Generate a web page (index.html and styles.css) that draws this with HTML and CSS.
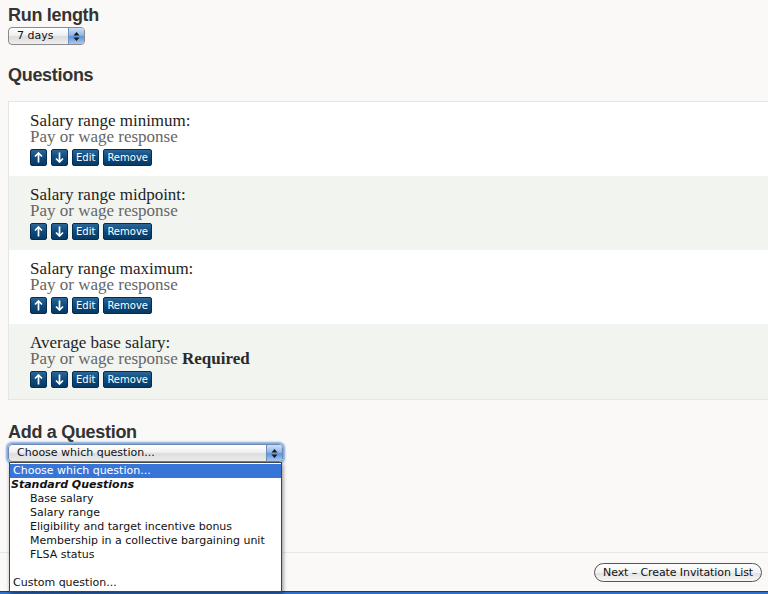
FILE: index.html
```html
<!DOCTYPE html>
<html>
<head>
<meta charset="utf-8">
<link rel="stylesheet" href="styles.css">
</head>
<body>
<div class="page">
  <h2 class="heading h-run">Run length</h2>
  <div class="select select-small">
    <span class="select-label">7 days</span>
    <span class="select-arrows"><svg width="7" height="11" viewBox="0 0 7 11"><path d="M3.5 1 L6.5 4.5 H0.5 Z M3.5 10 L6.5 6.5 H0.5 Z" fill="#1a1a1a"/></svg></span>
  </div>

  <h2 class="heading h-questions">Questions</h2>
  <div class="qlist">
    <div class="qrow">
      <div class="qtitle">Salary range minimum:</div>
      <div class="qtype">Pay or wage response</div>
      <div class="qbtns">
        <span class="btn btn-arrow"><svg width="9" height="11" viewBox="0 0 9 11"><path d="M4.5 1 V10.5 M1 4.5 L4.5 1 L8 4.5" stroke="#fff" stroke-width="1.7" fill="none"/></svg></span>
        <span class="btn btn-arrow"><svg width="9" height="11" viewBox="0 0 9 11"><path d="M4.5 0.5 V10 M1 6.5 L4.5 10 L8 6.5" stroke="#fff" stroke-width="1.7" fill="none"/></svg></span>
        <span class="btn">Edit</span>
        <span class="btn">Remove</span>
      </div>
    </div>
    <div class="qrow alt">
      <div class="qtitle">Salary range midpoint:</div>
      <div class="qtype">Pay or wage response</div>
      <div class="qbtns">
        <span class="btn btn-arrow"><svg width="9" height="11" viewBox="0 0 9 11"><path d="M4.5 1 V10.5 M1 4.5 L4.5 1 L8 4.5" stroke="#fff" stroke-width="1.7" fill="none"/></svg></span>
        <span class="btn btn-arrow"><svg width="9" height="11" viewBox="0 0 9 11"><path d="M4.5 0.5 V10 M1 6.5 L4.5 10 L8 6.5" stroke="#fff" stroke-width="1.7" fill="none"/></svg></span>
        <span class="btn">Edit</span>
        <span class="btn">Remove</span>
      </div>
    </div>
    <div class="qrow">
      <div class="qtitle">Salary range maximum:</div>
      <div class="qtype">Pay or wage response</div>
      <div class="qbtns">
        <span class="btn btn-arrow"><svg width="9" height="11" viewBox="0 0 9 11"><path d="M4.5 1 V10.5 M1 4.5 L4.5 1 L8 4.5" stroke="#fff" stroke-width="1.7" fill="none"/></svg></span>
        <span class="btn btn-arrow"><svg width="9" height="11" viewBox="0 0 9 11"><path d="M4.5 0.5 V10 M1 6.5 L4.5 10 L8 6.5" stroke="#fff" stroke-width="1.7" fill="none"/></svg></span>
        <span class="btn">Edit</span>
        <span class="btn">Remove</span>
      </div>
    </div>
    <div class="qrow alt">
      <div class="qtitle">Average base salary:</div>
      <div class="qtype">Pay or wage response <strong class="req">Required</strong></div>
      <div class="qbtns">
        <span class="btn btn-arrow"><svg width="9" height="11" viewBox="0 0 9 11"><path d="M4.5 1 V10.5 M1 4.5 L4.5 1 L8 4.5" stroke="#fff" stroke-width="1.7" fill="none"/></svg></span>
        <span class="btn btn-arrow"><svg width="9" height="11" viewBox="0 0 9 11"><path d="M4.5 0.5 V10 M1 6.5 L4.5 10 L8 6.5" stroke="#fff" stroke-width="1.7" fill="none"/></svg></span>
        <span class="btn">Edit</span>
        <span class="btn">Remove</span>
      </div>
    </div>
  </div>

  <h2 class="heading h-add">Add a Question</h2>
  <div class="addwrap">
    <div class="select select-wide">
      <span class="select-label">Choose which question...</span>
      <span class="select-arrows"><svg width="7" height="11" viewBox="0 0 7 11"><path d="M3.5 1 L6.5 4.5 H0.5 Z M3.5 10 L6.5 6.5 H0.5 Z" fill="#1a1a1a"/></svg></span>
    </div>
    <div class="dropdown">
      <div class="opt selected">Choose which question...</div>
      <div class="opt group">Standard Questions</div>
      <div class="opt sub">Base salary</div>
      <div class="opt sub">Salary range</div>
      <div class="opt sub">Eligibility and target incentive bonus</div>
      <div class="opt sub">Membership in a collective bargaining unit</div>
      <div class="opt sub">FLSA status</div>
      <div class="opt empty"></div>
      <div class="opt">Custom question...</div>
    </div>
  </div>
</div>
<div class="actions">
  <span class="next-btn">Next – Create Invitation List</span>
</div>
<div class="footer-bar"></div>
</body>
</html>
```
FILE: styles.css
```css
html, body {
  margin: 0;
  padding: 0;
  background: #faf9f7;
  overflow: hidden;
}
body {
  width: 768px;
  height: 594px;
  display: flex;
  flex-direction: column;
  font-family: "DejaVu Sans", sans-serif;
}
.page {
  padding-left: 8px;
  position: relative;
}
.heading {
  font-family: "Liberation Sans", Arial, sans-serif;
  font-weight: bold;
  font-size: 18px;
  line-height: 20px;
  color: #333;
  margin: 0;
  letter-spacing: -0.3px;
}
.h-run {
  padding-top: 5px;
}
.h-questions {
  margin-top: 20px;
}
.h-add {
  margin-top: 22px;
}

.select {
  display: flex;
  align-items: stretch;
  height: 16px;
  border: 1px solid #8a8a8a;
  border-radius: 4px;
  background: linear-gradient(#ffffff, #f0f0f0 45%, #dcdcdc 55%, #eeeeee);
  font-size: 11px;
  color: #111;
  overflow: hidden;
  box-sizing: content-box;
}
.select-small {
  width: 75px;
  margin-top: 2px;
}
.select-label {
  flex: 1;
  line-height: 16px;
  padding-left: 8px;
}
.select-arrows {
  width: 15px;
  display: flex;
  align-items: center;
  justify-content: center;
  border-left: 1px solid #6d8fbf;
  background: linear-gradient(#cfe0f6, #8fb6e8 45%, #5f93da 55%, #a9cbf3);
}

.qlist {
  margin-top: 16px;
  border: 1px solid #e6e6e4;
  border-right: none;
  display: flex;
  flex-direction: column;
}
.qrow {
  background: #ffffff;
  padding: 11px 0 10px 21px;
  font-family: "Liberation Serif", "Times New Roman", serif;
  font-size: 17px;
  line-height: 16px;
}
.qrow.alt {
  background: #f2f4ef;
}
.qrow:last-child {
  padding-bottom: 11px;
}
.qtitle {
  color: #1e1e1e;
}
.qtype {
  color: #666;
}
.req {
  color: #2a2a2a;
}
.qbtns {
  display: flex;
  gap: 4px;
  margin-top: 4px;
}
.btn {
  height: 17px;
  box-sizing: border-box;
  padding: 0 3px;
  border-radius: 2px;
  border: 1px solid #062d4f;
  background: linear-gradient(#2a6697, #0d4a7d 50%, #063a66);
  color: #fff;
  font-family: "DejaVu Sans", sans-serif;
  font-size: 10px;
  line-height: 15px;
  display: flex;
  align-items: center;
  justify-content: center;
}
.btn-arrow {
  width: 17px;
  padding: 0;
}

.addwrap {
  position: relative;
  margin-top: 2px;
  height: 108px;
}
.select-wide {
  width: 273px;
  border-color: #6c88b3;
  box-shadow: 0 0 2px 2px #7ea7e0;
}
.dropdown {
  position: absolute;
  left: 1px;
  top: 18px;
  width: 271px;
  background: #fff;
  border: 1px solid #444;
  box-shadow: 1px 2px 4px rgba(0,0,0,0.45);
  padding: 1px 0 1px;
  z-index: 5;
  font-size: 11px;
  color: #111;
}
.opt {
  height: 14px;
  line-height: 14px;
  padding-left: 3px;
  white-space: nowrap;
}
.opt.selected {
  background: #3875d7;
  color: #fff;
}
.opt.group {
  font-weight: bold;
  font-style: italic;
  padding-left: 1px;
}
.opt.sub {
  padding-left: 20px;
}

.actions {
  border-top: 1px solid #e6e6e4;
  padding: 10px 6px 0 0;
  display: flex;
  justify-content: flex-end;
  height: 28px;
}
.next-btn {
  height: 17px;
  line-height: 17px;
  padding: 0 8px;
  border: 1px solid #555;
  border-radius: 10px;
  background: linear-gradient(#ffffff, #f2f2f2 50%, #e2e2e2 55%, #f7f7f7);
  font-size: 11px;
  letter-spacing: -0.1px;
  color: #111;
}
.footer-bar {
  flex: 1;
  border-top: 1px solid #0f3f86;
  background: #2f6fc9;
}
```
